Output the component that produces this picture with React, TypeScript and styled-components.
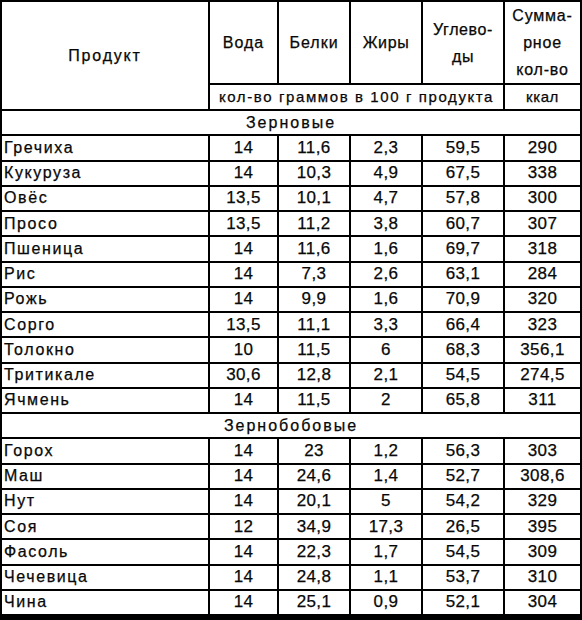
import React from "react";
import styled, { createGlobalStyle } from "styled-components";

const Global = createGlobalStyle`
  html, body { margin: 0; padding: 0; background: #fff; }
  body { font-family: "Liberation Sans", Arial, sans-serif; color: #0a0a0a; }
`;

const Page = styled.div`
  width: 582px;
  display: flex;
  flex-direction: column;
`;

const Table = styled.table`
  width: 580px;
  border-collapse: collapse;
  table-layout: fixed;
  border-top: 1px solid #222;
`;

const Cell = styled.td<{ $align?: "left" | "center"; $size?: number; $ls?: number }>`
  border: 2px solid #000;
  padding: 0 0 0 ${(p) => (p.$align === "left" ? "2px" : "0")};
  text-align: ${(p) => p.$align || "center"};
  vertical-align: middle;
  font-size: ${(p) => p.$size || 17}px;
  letter-spacing: ${(p) => (p.$ls ?? 0.4)}px;
  line-height: 18px;
  white-space: nowrap;
  overflow: hidden;
  -webkit-text-stroke: 0.25px #000;
`;

const HeadCell = styled(Cell)`
  line-height: 27px;
  white-space: normal;
`;

const Row = styled.tr<{ $h: number }>`
  height: ${(p) => p.$h}px;
`;

const ScanEdge = styled.div`
  height: 8px;
  background: #000;
  margin-top: -1px;
`;

type Item = [string, string, string, string, string, string];

const grains: Item[] = [
  ["Гречиха", "14", "11,6", "2,3", "59,5", "290"],
  ["Кукуруза", "14", "10,3", "4,9", "67,5", "338"],
  ["Овёс", "13,5", "10,1", "4,7", "57,8", "300"],
  ["Просо", "13,5", "11,2", "3,8", "60,7", "307"],
  ["Пшеница", "14", "11,6", "1,6", "69,7", "318"],
  ["Рис", "14", "7,3", "2,6", "63,1", "284"],
  ["Рожь", "14", "9,9", "1,6", "70,9", "320"],
  ["Сорго", "13,5", "11,1", "3,3", "66,4", "323"],
  ["Толокно", "10", "11,5", "6", "68,3", "356,1"],
  ["Тритикале", "30,6", "12,8", "2,1", "54,5", "274,5"],
  ["Ячмень", "14", "11,5", "2", "65,8", "311"],
];

const legumes: Item[] = [
  ["Горох", "14", "23", "1,2", "56,3", "303"],
  ["Маш", "14", "24,6", "1,4", "52,7", "308,6"],
  ["Нут", "14", "20,1", "5", "54,2", "329"],
  ["Соя", "12", "34,9", "17,3", "26,5", "395"],
  ["Фасоль", "14", "22,3", "1,7", "54,5", "309"],
  ["Чечевица", "14", "24,8", "1,1", "53,7", "310"],
  ["Чина", "14", "25,1", "0,9", "52,1", "304"],
];

const ROW_H = 25.25;

const DataRow = ({ item }: { item: Item }) => (
  <Row $h={ROW_H}>
    <Cell $align="left" $size={16} $ls={1.6}>{item[0]}</Cell>
    {item.slice(1).map((v, i) => (
      <Cell key={i}>{v}</Cell>
    ))}
  </Row>
);

const Section = ({ title }: { title: string }) => (
  <Row $h={ROW_H}>
    <Cell colSpan={6} $size={16} $ls={2}>{title}</Cell>
  </Row>
);

export default function App() {
  return (
    <Page>
      <Global />
      <Table>
        <colgroup>
          <col style={{ width: 208 }} />
          <col style={{ width: 69 }} />
          <col style={{ width: 72 }} />
          <col style={{ width: 72 }} />
          <col style={{ width: 82 }} />
          <col style={{ width: 77 }} />
        </colgroup>
        <tbody>
          <Row $h={81}>
            <HeadCell rowSpan={2} $size={16} $ls={1.8}>Продукт</HeadCell>
            <HeadCell $size={16} $ls={1}>Вода</HeadCell>
            <HeadCell $size={16} $ls={1}>Белки</HeadCell>
            <HeadCell $size={16} $ls={0.6}>Жиры</HeadCell>
            <HeadCell $size={16} $ls={0.6}>Углево-<br />ды</HeadCell>
            <HeadCell $size={16} $ls={0.8}>Сумма-<br />рное<br />кол-во</HeadCell>
          </Row>
          <Row $h={26}>
            <Cell colSpan={4} $size={15} $ls={1.6}>кол-во граммов в 100 г продукта</Cell>
            <Cell $size={15} $ls={0.6}>ккал</Cell>
          </Row>
          <Section title="Зерновые" />
          {grains.map((g) => (
            <DataRow key={g[0]} item={g} />
          ))}
          <Section title="Зернобобовые" />
          {legumes.map((g) => (
            <DataRow key={g[0]} item={g} />
          ))}
        </tbody>
      </Table>
      <ScanEdge />
    </Page>
  );
}
